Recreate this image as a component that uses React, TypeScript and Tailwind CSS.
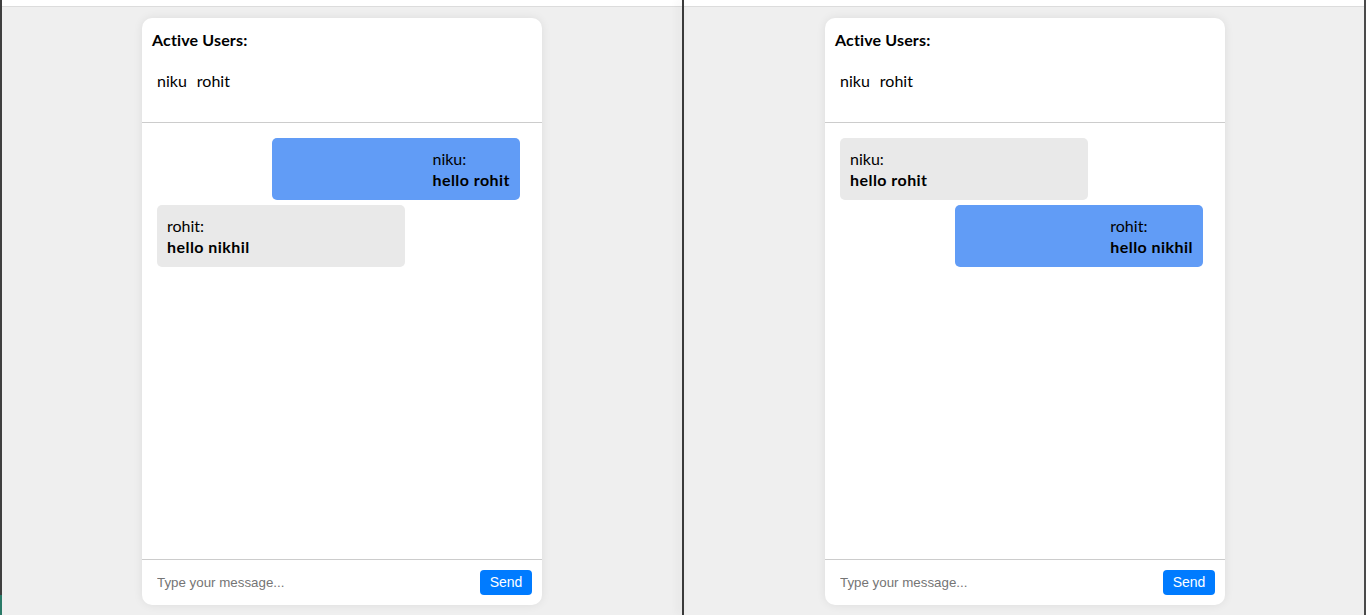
import React from "react";

type Msg = { user: string; text: string; mine: boolean };

function ChatCard({ messages }: { messages: Msg[] }) {
  return (
    <div className="mt-[11px] flex h-[587px] w-[400px] flex-col rounded-[10px] bg-white shadow-[0_0_10px_rgba(0,0,0,0.08)] font-['Lato','Noto_Sans',sans-serif] text-black">
      <div className="h-[105px] shrink-0 border-b border-[#cccccc] px-[10px] pt-[10px]">
        <div className="h-6 text-[16px] font-bold leading-6 tracking-[0.15px]">Active Users:</div>
        <div className="mt-[18px] flex text-[16px] leading-[21px]">
          <span className="mx-[5px]">niku</span>
          <span className="mx-[5px]">rohit</span>
        </div>
      </div>
      <div className="flex flex-1 flex-col gap-[5px] px-[15px] pt-[15px]">
        {messages.map((m, i) => (
          <div
            key={i}
            className={
              m.mine
                ? "mr-[7px] flex w-[248px] justify-end self-end rounded-[5px] bg-[#619cf6] p-[10px]"
                : "flex w-[248px] justify-start self-start rounded-[5px] bg-[#e9e9e9] p-[10px]"
            }
          >
            <div className="text-[16px] leading-[21px]">
              <div>{m.user}:</div>
              <div className="font-bold tracking-[0.45px]">{m.text}</div>
            </div>
          </div>
        ))}
      </div>
      <div className="flex h-[46px] shrink-0 items-center border-t border-[#cccccc] px-[10px]">
        <input
          className="h-[24px] flex-1 bg-transparent px-[5px] font-['Liberation_Sans',Arial,sans-serif] text-[13.33px] text-black outline-none placeholder:text-[#757575]"
          placeholder="Type your message..."
        />
        <button className="mb-[1px] h-[25px] w-[52px] rounded-[4px] bg-[#007bff] font-['Liberation_Sans',Arial,sans-serif] text-[14px] text-white">
          Send
        </button>
      </div>
    </div>
  );
}

function Pane({ messages, shift }: { messages: Msg[]; shift?: boolean }) {
  return (
    <div className="flex h-full w-[680px] flex-col">
      <div className="h-[7px] shrink-0 border-b border-[#dcdcdc] bg-white" />
      <div className={shift ? "flex flex-1 justify-center bg-[#efefef] pl-[2px]" : "flex flex-1 justify-center bg-[#efefef]"}>
        <ChatCard messages={messages} />
      </div>
    </div>
  );
}

export default function App() {
  const left: Msg[] = [
    { user: "niku", text: "hello rohit", mine: true },
    { user: "rohit", text: "hello nikhil", mine: false },
  ];
  const right: Msg[] = [
    { user: "niku", text: "hello rohit", mine: false },
    { user: "rohit", text: "hello nikhil", mine: true },
  ];
  return (
    <div className="flex h-[615px] w-[1366px] overflow-hidden bg-[#efefef]">
      <div className="flex h-full w-[2px] flex-col">
        <div className="h-[595px] bg-[#3f3f3f]" />
        <div className="flex-1 bg-[#2a7a68]" />
      </div>
      <Pane messages={left} />
      <div className="z-10 h-full w-[2px] bg-[#3a3a3a] shadow-[-3px_0_8px_rgba(0,0,0,0.12)]" />
      <Pane messages={right} shift />
      <div className="h-full w-[2px] bg-[#4a4a4a]" />
    </div>
  );
}
